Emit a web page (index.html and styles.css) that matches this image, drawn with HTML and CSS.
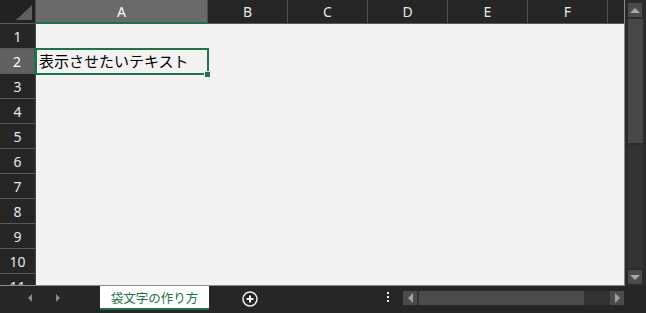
FILE: index.html
```html
<!DOCTYPE html>
<html lang="ja">
<head>
    <meta charset="UTF-8">
    <meta name="viewport" content="width=device-width, initial-scale=1.0">
    <title>Book1 - Excel</title>
    <link rel="stylesheet" href="styles.css">
</head>
<body>
    <div class="app">
        <div class="main">
            <div class="sheet">
                <div class="corner"><span class="corner-tri"></span></div>
                <div class="col-head selected">A</div>
                <div class="col-head">B</div>
                <div class="col-head">C</div>
                <div class="col-head">D</div>
                <div class="col-head">E</div>
                <div class="col-head">F</div>
                <div class="col-head last"></div>

                <div class="row-head">1</div>
                <div class="cells"></div>
                <div class="row-head selected">2</div>
                <div class="cells">
                    <div class="cell active">表示させたいテキスト</div>
                </div>
                <div class="row-head">3</div>
                <div class="cells"></div>
                <div class="row-head">4</div>
                <div class="cells"></div>
                <div class="row-head">5</div>
                <div class="cells"></div>
                <div class="row-head">6</div>
                <div class="cells"></div>
                <div class="row-head">7</div>
                <div class="cells"></div>
                <div class="row-head">8</div>
                <div class="cells"></div>
                <div class="row-head">9</div>
                <div class="cells"></div>
                <div class="row-head">10</div>
                <div class="cells"></div>
                <div class="row-head">11</div>
                <div class="cells"></div>
            </div>
            <div class="vscroll">
                <div class="sb-btn"><span class="tri up"></span></div>
                <div class="vthumb"></div>
                <div class="vtrack"></div>
                <div class="sb-btn"><span class="tri down"></span></div>
            </div>
        </div>
        <div class="bottom">
            <div class="tab-nav">
                <span class="tri left small"></span>
                <span class="tri right small"></span>
            </div>
            <div class="sheet-tab">袋文字の作り方</div>
            <div class="add-sheet">
                <svg width="16" height="16" viewBox="0 0 16 16">
                    <circle cx="8" cy="8" r="7" fill="none" stroke="#f0f0f0" stroke-width="1.5"/>
                    <path d="M8 4.5v7M4.5 8h7" stroke="#f0f0f0" stroke-width="2"/>
                </svg>
            </div>
            <div class="dots"><span></span><span></span><span></span></div>
            <div class="hscroll">
                <div class="sb-btn"><span class="tri left"></span></div>
                <div class="hthumb"></div>
                <div class="htrack"></div>
                <div class="sb-btn"><span class="tri right"></span></div>
            </div>
        </div>
    </div>
</body>
</html>
```

FILE: styles.css
```css
body {
    margin: 0;
    background-color: #262626;
    font-family: "Noto Sans", "Liberation Sans", "Noto Sans CJK JP", sans-serif;
    overflow: hidden;
}
.app {
    width: 646px;
    height: 313px;
    display: flex;
    flex-direction: column;
}
.main {
    height: 286px;
    display: flex;
}
.sheet {
    width: 625px;
    height: 286px;
    overflow: hidden;
    display: grid;
    grid-template-columns: 36px 172px 80px 80px 80px 80px 80px 17px;
    grid-template-rows: 24px repeat(11, 25px);
    background-color: #f2f2f2;
    border-right: 1px solid #8a8a8a;
    border-bottom: 1px solid #8a8a8a;
    box-sizing: border-box;
}
.corner {
    background-color: #222;
    border-right: 1px solid #4a4a4a;
    border-bottom: 1px solid #5a5a5a;
    position: relative;
}
.corner-tri {
    position: absolute;
    right: 3px;
    bottom: 3px;
    width: 0;
    height: 0;
    border-left: 16px solid transparent;
    border-bottom: 15px solid #5f5f5f;
}
.col-head {
    background-color: #262626;
    color: #e8e8e8;
    font-size: 14px;
    display: flex;
    align-items: center;
    justify-content: center;
    border-right: 1px solid #4e4e4e;
    border-bottom: 1px solid #5a5a5a;
}
.col-head.selected {
    background-color: #6a6a6a;
    border-bottom: 2px solid #1f7246;
    color: #fff;
}
.col-head.last {
    border-right: none;
}
.row-head {
    grid-column: 1;
    background-color: #262626;
    color: #e8e8e8;
    font-size: 14px;
    display: flex;
    align-items: center;
    justify-content: center;
    border-right: 1px solid #4a4a4a;
    border-bottom: 1px solid #5a5a5a;
}
.row-head.selected {
    background-color: #616161;
    border-right: 2px solid #1f7246;
    color: #fff;
}
.cells {
    grid-column: 2 / -1;
    position: relative;
}
.cell {
    height: 25px;
    width: 172px;
    box-sizing: border-box;
    padding-left: 3px;
    font-family: "Noto Sans CJK JP", sans-serif;
    font-size: 15px;
    line-height: 23px;
    color: #000;
    white-space: nowrap;
}
.cell.active {
    position: relative;
}
.cell.active::before {
    content: "";
    position: absolute;
    left: -1px;
    top: -1px;
    width: 174px;
    height: 27px;
    border: 2px solid #1f7246;
    box-sizing: border-box;
}
.cell.active::after {
    content: "";
    position: absolute;
    left: 168px;
    top: 22px;
    width: 5px;
    height: 5px;
    background-color: #1f7246;
    border: 1px solid #f2f2f2;
}
.vscroll {
    width: 21px;
    padding: 3px 3px 2px 3px;
    box-sizing: border-box;
    display: flex;
    flex-direction: column;
    gap: 2px;
    background-color: #2b2b2b;
}
.sb-btn {
    width: 14px;
    height: 14px;
    background-color: #4b4b4b;
    display: flex;
    align-items: center;
    justify-content: center;
    flex-shrink: 0;
}
.vthumb {
    height: 124px;
    background-color: #474747;
}
.vtrack {
    flex: 1;
    background-color: #333;
}
.tri {
    width: 0;
    height: 0;
}
.tri.up {
    border-left: 5px solid transparent;
    border-right: 5px solid transparent;
    border-bottom: 5px solid #a8a8a8;
}
.tri.down {
    border-left: 5px solid transparent;
    border-right: 5px solid transparent;
    border-top: 5px solid #a8a8a8;
}
.tri.left {
    border-top: 5px solid transparent;
    border-bottom: 5px solid transparent;
    border-right: 5px solid #a0a0a0;
}
.tri.right {
    border-top: 5px solid transparent;
    border-bottom: 5px solid transparent;
    border-left: 5px solid #a0a0a0;
}
.tri.small {
    border-top-width: 4px;
    border-bottom-width: 4px;
    border-left-color: #8a8a8a;
    border-right-color: #8a8a8a;
}
.bottom {
    flex: 1;
    display: flex;
    align-items: flex-start;
    background-color: #262626;
}
.tab-nav {
    width: 100px;
    height: 24px;
    display: flex;
    align-items: center;
    gap: 24px;
    padding-left: 28px;
    box-sizing: border-box;
}
.tab-nav .tri.left {
    border-right-width: 4px;
}
.tab-nav .tri.right {
    border-left-width: 4px;
}
.sheet-tab {
    width: 109px;
    height: 24px;
    box-sizing: border-box;
    background-color: #fff;
    color: #1f7246;
    font-family: "Noto Sans CJK JP", sans-serif;
    font-size: 12.5px;
    display: flex;
    align-items: center;
    justify-content: center;
    border-bottom: 2px solid #1f7246;
}
.add-sheet {
    width: 16px;
    height: 16px;
    margin: 4px 0 0 33px;
}
.dots {
    margin: 6px 0 0 129px;
    display: flex;
    flex-direction: column;
    gap: 2px;
}
.dots span {
    width: 2px;
    height: 2px;
    background-color: #f0f0f0;
}
.hscroll {
    margin: 5px 0 0 14px;
    width: 221px;
    height: 14px;
    display: flex;
    gap: 2px;
    background-color: #333;
}
.hthumb {
    width: 165px;
    background-color: #4b4b4b;
}
.htrack {
    flex: 1;
}
```
